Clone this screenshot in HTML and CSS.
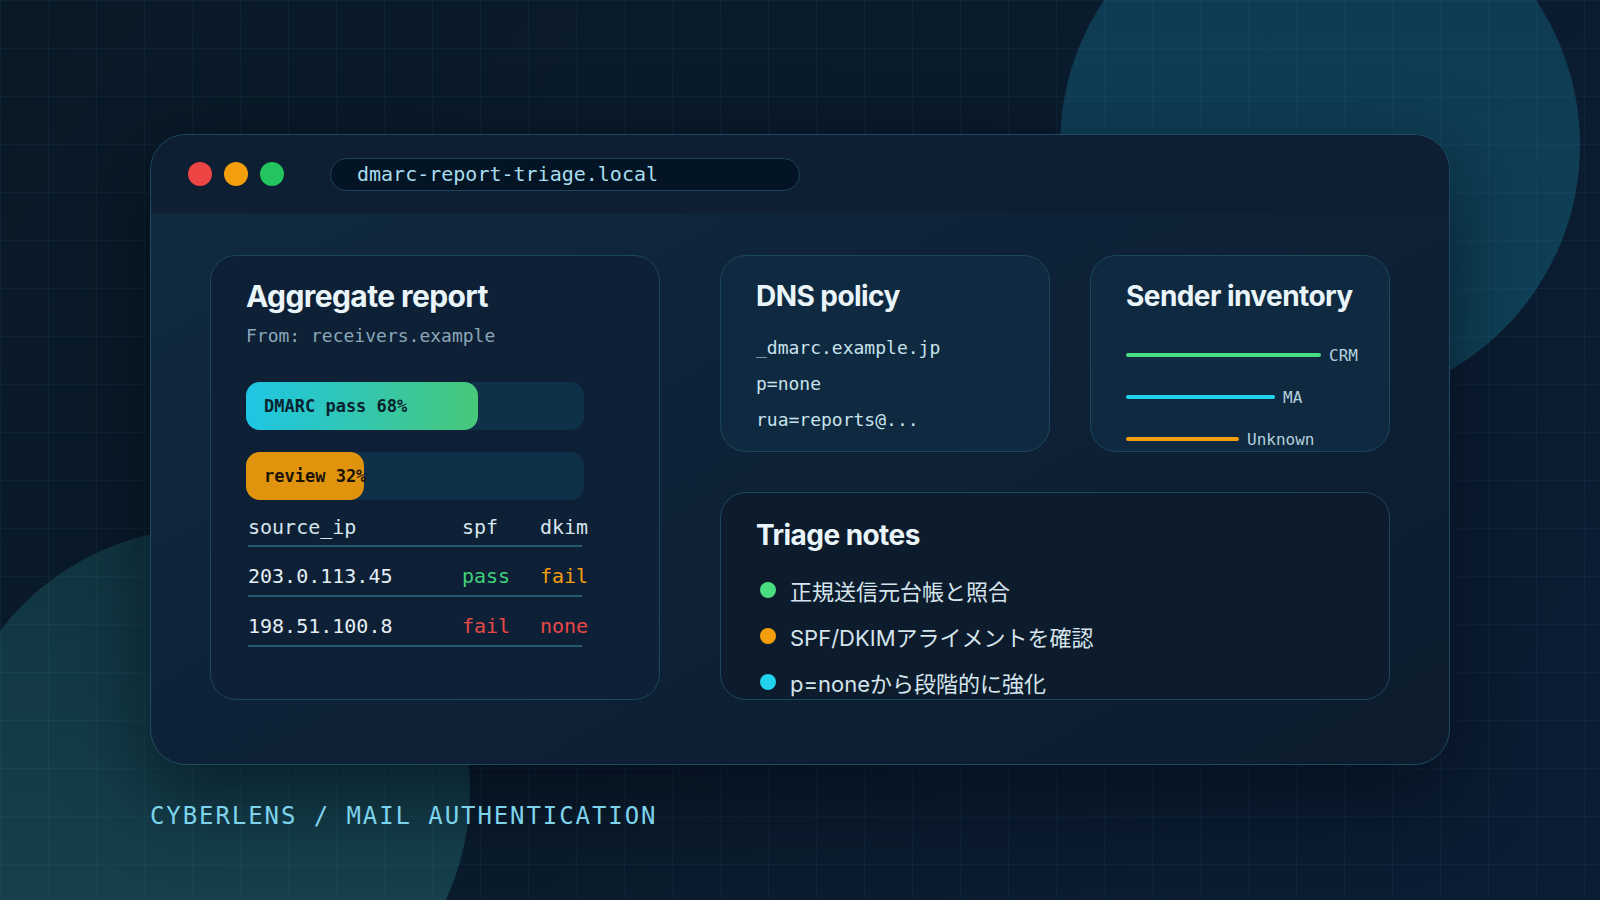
FILE: index.html
```html
<!DOCTYPE html>
<html lang="ja">
<head>
    <meta charset="UTF-8">
    <meta name="viewport" content="width=device-width, initial-scale=1.0">
    <title>dmarc-report-triage.local</title>
    <link rel="stylesheet" href="styles.css">
</head>
<body>
    <div class="backdrop">
        <div class="orb orb-top"></div>
        <div class="orb orb-bottom"></div>
        <div class="grid-lines"></div>
    </div>

    <main class="stage">
        <section class="window">
            <header class="titlebar">
                <div class="lights">
                    <span class="light red"></span>
                    <span class="light amber"></span>
                    <span class="light green"></span>
                </div>
                <div class="address">dmarc-report-triage.local</div>
            </header>

            <div class="window-body">
                <article class="card report">
                    <h3>Aggregate report</h3>
                    <p class="from">From: receivers.example</p>
                    <div class="bars">
                        <div class="bar"><div class="fill pass" style="width: 68.6%">DMARC pass 68%</div></div>
                        <div class="bar"><div class="fill review" style="width: 35%">review 32%</div></div>
                    </div>
                    <div class="table">
                        <div class="row head"><span>source_ip</span><span>spf</span><span>dkim</span></div>
                        <div class="row"><span>203.0.113.45</span><span class="ok">pass</span><span class="warn">fail</span></div>
                        <div class="row"><span>198.51.100.8</span><span class="bad">fail</span><span class="bad">none</span></div>
                    </div>
                </article>

                <div class="side">
                    <article class="card dns">
                        <h3>DNS policy</h3>
                        <ul class="records">
                            <li>_dmarc.example.jp</li>
                            <li>p=none</li>
                            <li>rua=reports@...</li>
                        </ul>
                    </article>

                    <article class="card senders">
                        <h3>Sender inventory</h3>
                        <ul class="sender-list">
                            <li><span class="line green" style="width: 195px"></span>CRM</li>
                            <li><span class="line cyan" style="width: 149px"></span>MA</li>
                            <li><span class="line orange" style="width: 113px"></span>Unknown</li>
                        </ul>
                    </article>

                    <article class="card notes">
                        <h3>Triage notes</h3>
                        <ul class="note-list">
                            <li><span class="dot green"></span>正規送信元台帳と照合</li>
                            <li><span class="dot orange"></span>SPF/DKIMアライメントを確認</li>
                            <li><span class="dot cyan"></span>p=noneから段階的に強化</li>
                        </ul>
                    </article>
                </div>
            </div>
        </section>

        <p class="caption">CYBERLENS / MAIL AUTHENTICATION</p>
    </main>
</body>
</html>
```

FILE: styles.css
```css
html, body {
    margin: 0;
    height: 900px;
    overflow: hidden;
}
body {
    position: relative;
    background: linear-gradient(120deg, #091926 0%, #0a1b2c 50%, #0b1d33 100%);
    font-family: Inter, "Noto Sans CJK JP", sans-serif;
    color: #e8f4fa;
}
.backdrop {
    position: absolute;
    inset: 0;
    overflow: hidden;
}
.orb {
    position: absolute;
    border-radius: 50%;
}
.orb-top {
    left: 1060px;
    top: -115px;
    width: 520px;
    height: 520px;
    background: linear-gradient(180deg, #0e3a52 0%, #0f4157 100%);
}
.orb-bottom {
    left: -54px;
    top: 528px;
    width: 524px;
    height: 524px;
    background: linear-gradient(180deg, #113541 0%, #16434f 100%);
}
.grid-lines {
    position: absolute;
    inset: 0;
    background-image:
        linear-gradient(to right, rgba(90, 170, 210, 0.06) 1px, transparent 1px),
        linear-gradient(to bottom, rgba(90, 170, 210, 0.06) 1px, transparent 1px);
    background-size: 48px 48px;
}
.stage {
    position: relative;
    padding: 134px 150px 0;
}

/* window */
.window {
    width: 1300px;
    height: 631px;
    box-sizing: border-box;
    border: 1px solid #1d4a5f;
    border-radius: 36px;
    overflow: hidden;
    background: linear-gradient(150deg, #112b40 0%, #0e2237 45%, #0c1c2d 100%);
    box-shadow: 0 28px 80px rgba(2, 8, 16, 0.55);
}
.titlebar {
    height: 78px;
    display: flex;
    align-items: center;
    padding: 0 37px;
    background: #0f1f33;
}
.lights {
    display: flex;
    gap: 12px;
}
.light {
    width: 24px;
    height: 24px;
    border-radius: 50%;
}
.light.red { background: #ef4444; }
.light.amber { background: #f59e0b; }
.light.green { background: #22c55e; }
.address {
    margin-left: 46px;
    width: 470px;
    height: 33px;
    box-sizing: border-box;
    display: flex;
    align-items: center;
    padding: 0 26px;
    border: 1px solid #1b4558;
    border-radius: 17px;
    background: #031424;
    font: 20px "DejaVu Sans Mono", monospace;
    color: #a8ddef;
}
.window-body {
    display: grid;
    grid-template-columns: 450px 670px;
    column-gap: 60px;
    padding: 42px 59px;
}
.side {
    display: grid;
    grid-template-columns: 330px 300px;
    grid-template-rows: 197px 208px;
    gap: 40px;
}

/* cards */
.card {
    box-sizing: border-box;
    border: 1px solid #1c465b;
    border-radius: 26px;
    padding: 22px 35px;
    overflow: hidden;
}
.card h3 {
    margin: 0;
    font: 700 28px/36px Inter, sans-serif;
    letter-spacing: -0.02em;
    white-space: nowrap;
    color: #eaf5fa;
}
.card.report h3 {
    font-size: 30px;
}
.card ul {
    list-style: none;
    margin: 0;
    padding: 0;
}
.report { background: #0e2035; }
.dns, .senders { background: #0f2a40; }
.notes {
    grid-column: 1 / 3;
    background: #0d1c2c;
    padding-top: 24px;
}

.from {
    margin: 10px 0 0;
    font: 18px/24px "DejaVu Sans Mono", monospace;
    color: #8aa7b9;
}
.bars {
    margin-top: 34px;
    width: 338px;
    display: flex;
    flex-direction: column;
    gap: 22px;
}
.bar {
    height: 48px;
    border-radius: 14px;
    background: #0f3049;
}
.fill {
    height: 100%;
    box-sizing: border-box;
    display: flex;
    align-items: center;
    padding-left: 18px;
    border-radius: 14px;
    white-space: nowrap;
    font: 700 17px "DejaVu Sans Mono", monospace;
    color: #082230;
}
.fill.pass { background: linear-gradient(90deg, #1ec6e4 0%, #48c878 100%); }
.fill.review { background: #e0940e; color: #1d1406; }

.table {
    width: 334px;
    margin-left: 2px;
    font: 20px/26px "DejaVu Sans Mono", monospace;
    color: #e4eef4;
}
.row {
    display: grid;
    grid-template-columns: 214px 78px 42px;
    padding: 16px 0 6px;
    border-bottom: 2px solid #245a70;
    white-space: nowrap;
}
.row.head {
    padding: 14px 0 5px;
    color: #d6e5ee;
}
.ok { color: #41d07b; }
.warn { color: #f59e0b; }
.bad { color: #ea4848; }

.records {
    margin-top: 16px !important;
    font: 18px/36px "DejaVu Sans Mono", monospace;
    color: #c8e2ed;
}

.sender-list {
    margin-top: 20px !important;
    font: 16px "DejaVu Sans Mono", monospace;
    color: #b3d0de;
}
.sender-list li {
    height: 42px;
    display: flex;
    align-items: center;
    gap: 8px;
    white-space: nowrap;
}
.line {
    flex-shrink: 0;
    height: 4px;
    border-radius: 2px;
}
.line.green { background: #4ade80; }
.line.cyan { background: #22d3ee; }
.line.orange { background: #f59e0b; }

.note-list {
    margin-top: 14px !important;
    font-size: 22px;
    color: #d5e4ed;
}
.note-list li {
    height: 46px;
    display: flex;
    align-items: center;
    gap: 14px;
}
.dot {
    width: 16px;
    height: 16px;
    margin-left: 4px;
    border-radius: 50%;
}
.dot.green { background: #4ade80; }
.dot.orange { background: #f59e0b; }
.dot.cyan { background: #22d3ee; }

.caption {
    margin: 37px 0 0;
    font: 24px "DejaVu Sans Mono", monospace;
    letter-spacing: 0.08em;
    color: #7dd3ec;
}
```
